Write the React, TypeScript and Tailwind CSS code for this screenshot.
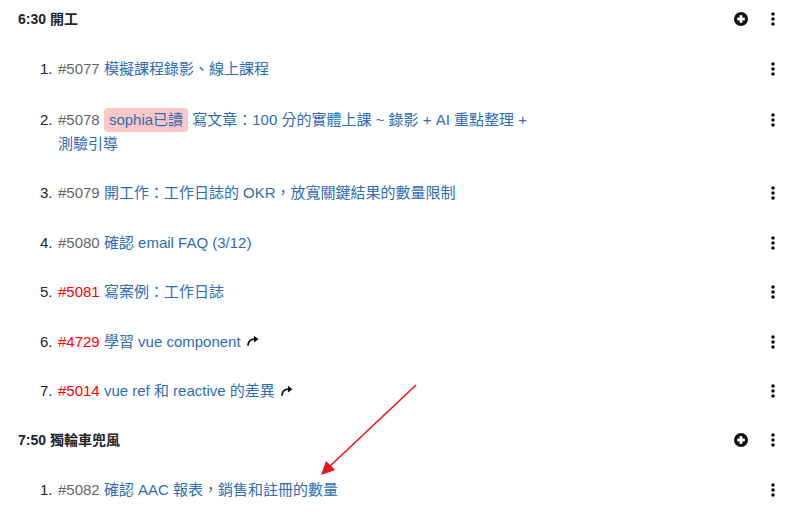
import React from 'react';

type Item = {
  id: string;
  hot?: boolean;
  badge?: string;
  title: string;
  linked?: boolean;
};

const sections: { time: string; title: string; items: Item[] }[] = [
  {
    time: '6:30',
    title: '開工',
    items: [
      { id: '#5077', title: '模擬課程錄影、線上課程' },
      { id: '#5078', badge: 'sophia已讀', title: '寫文章：100 分的實體上課 ~ 錄影 + AI 重點整理 + 測驗引導' },
      { id: '#5079', title: '開工作：工作日誌的 OKR，放寬關鍵結果的數量限制' },
      { id: '#5080', title: '確認 email FAQ (3/12)' },
      { id: '#5081', hot: true, title: '寫案例：工作日誌' },
      { id: '#4729', hot: true, title: '學習 vue component', linked: true },
      { id: '#5014', hot: true, title: 'vue ref 和 reactive 的差異', linked: true },
    ],
  },
  {
    time: '7:50',
    title: '獨輪車兜風',
    items: [{ id: '#5082', title: '確認 AAC 報表，銷售和註冊的數量' }],
  },
];

const PlusCircle = () => (
  <svg width="14" height="14" viewBox="0 0 14 14">
    <circle cx="7" cy="7" r="7" fill="#111" />
    <rect x="3.2" y="5.6" width="7.6" height="2.8" fill="#fff" />
    <rect x="5.6" y="3.2" width="2.8" height="7.6" fill="#fff" />
  </svg>
);

const Dots = () => (
  <svg width="4" height="14" viewBox="0 0 4 14">
    <circle cx="2" cy="2" r="1.8" fill="#111" />
    <circle cx="2" cy="7" r="1.8" fill="#111" />
    <circle cx="2" cy="12" r="1.8" fill="#111" />
  </svg>
);

const Share = () => (
  <svg width="12" height="11" viewBox="0 0 12 11" className="inline-block ml-[6px] -translate-y-[2px]">
    <path d="M1 10 C1.5 6 4 4.2 7.5 4.2" fill="none" stroke="#111" strokeWidth="1.8" strokeLinecap="round" />
    <path d="M7 0.8 L11.5 4.2 L7 7.6 Z" fill="#111" />
  </svg>
);

export default function App() {
  return (
    <div
      className="relative w-[800px] h-[519px] overflow-hidden bg-white text-[#212529]"
      style={{ fontFamily: '"Liberation Sans", Arial, "Noto Sans CJK TC", sans-serif' }}
    >
      {sections.map((s) => (
        <section key={s.time}>
          <div className="flex items-center justify-between pl-[18px] pr-[25px] py-[7px] leading-6">
            <h2 className="text-[14px] font-bold">
              {s.time} {s.title}
            </h2>
            <div className="flex items-center gap-[23px]">
              <PlusCircle />
              <Dots />
            </div>
          </div>
          <ol className="pt-[6.5px] pb-[4.5px]">
            {s.items.map((it, i) => (
              <li
                key={it.id}
                className={`flex items-start justify-between pl-[40px] pr-[25px] pb-[12.75px] text-[15px] leading-6 ${
                  it.badge ? 'pt-[13.75px]' : 'pt-[12.75px]'
                }`}
              >
                <div className="flex">
                  <span className="w-[18px] shrink-0">{i + 1}.</span>
                  <p className="max-w-[475px]">
                    <span className={it.hot ? 'text-[#ff0000]' : 'text-[#666]'}>{it.id}</span>{' '}
                    {it.badge && (
                      <>
                        <span className="inline-block rounded-[4px] bg-[#f8c8c8] px-[5px] leading-6 text-[#2f6db5]">
                          {it.badge}
                        </span>{' '}
                      </>
                    )}
                    <a className="text-[#2f6db5]">{it.title}</a>
                    {it.linked && <Share />}
                  </p>
                </div>
                <div className="pt-[5px]">
                  <Dots />
                </div>
              </li>
            ))}
          </ol>
        </section>
      ))}
      <svg className="absolute left-0 top-0 pointer-events-none" width="800" height="519">
        <line x1="416" y1="385" x2="329" y2="467" stroke="#e8141c" strokeWidth="1.6" />
        <polygon points="321,475 326,461 335,470" fill="#e8141c" />
      </svg>
    </div>
  );
}
